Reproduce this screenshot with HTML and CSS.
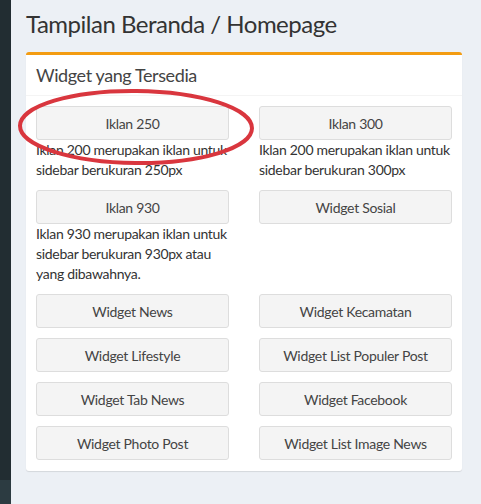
FILE: index.html
```html
<!DOCTYPE html>
<html>
<head>
<meta charset="utf-8">
<link rel="stylesheet" href="styles.css">
</head>
<body>
<aside class="sidebar"><div class="sidebar-fill"></div><div class="sidebar-item"></div></aside>
<main class="wrapper">
  <header class="content-header"><h1>Tampilan Beranda / Homepage</h1></header>
  <section class="content">
    <div class="box">
      <div class="box-header"><h3>Widget yang Tersedia</h3></div>
      <div class="box-body">
        <div class="row">
          <div class="col"><button class="btn">Iklan 250</button><p>Iklan 200 merupakan iklan untuk sidebar berukuran 250px</p></div>
          <div class="col"><button class="btn">Iklan 300</button><p>Iklan 200 merupakan iklan untuk sidebar berukuran 300px</p></div>
        </div>
        <div class="row">
          <div class="col"><button class="btn">Iklan 930</button><p>Iklan 930 merupakan iklan untuk sidebar berukuran 930px atau yang dibawahnya.</p></div>
          <div class="col"><button class="btn">Widget Sosial</button></div>
        </div>
        <div class="row grid">
          <button class="btn">Widget News</button><button class="btn">Widget Kecamatan</button>
          <button class="btn">Widget Lifestyle</button><button class="btn">Widget List Populer Post</button>
          <button class="btn">Widget Tab News</button><button class="btn">Widget Facebook</button>
          <button class="btn">Widget Photo Post</button><button class="btn">Widget List Image News</button>
        </div>
        <svg class="ring" width="240" height="80" viewBox="0 0 240 80"><ellipse cx="119" cy="39" rx="116" ry="36" fill="none" stroke="#d9363e" stroke-width="4" transform="rotate(0.6 119 39)"/></svg>
      </div>
    </div>
  </section>
</main>
</body>
</html>
```
FILE: styles.css
```css
* { box-sizing: border-box; }
html, body { margin: 0; height: 100%; }
body {
  display: flex;
  background: #ecf0f5;
  font-family: Lato, "Open Sans", sans-serif;
  font-size: 14px;
  letter-spacing: -0.3px;
  color: #333;
  overflow: hidden;
}
.sidebar { width: 11px; display: flex; flex-direction: column; flex: none; }
.sidebar-fill { flex: 1; background: #222d32; }
.sidebar-item { height: 24px; background: #2c3b41; }
.wrapper { flex: 1; }
.content-header { padding: 11px 15px 0; }
.content-header h1 { margin: 0; font-size: 24px; font-weight: 400; line-height: 1.1; letter-spacing: -0.5px; }
.content { padding: 15px 19px 15px 15px; }
.box {
  position: relative;
  background: #fff;
  border-top: 3px solid #f39c12;
  border-radius: 3px;
  box-shadow: 0 1px 1px rgba(0,0,0,0.1);
}
.box-header { padding: 10px; border-bottom: 1px solid #f4f4f4; }
.box-header h3 { margin: 0; font-size: 18px; font-weight: 400; line-height: 20px; color: #444; letter-spacing: -0.4px; }
.box-body { padding: 10px 10px 1px; position: relative; }
.row { display: grid; grid-template-columns: 1fr 1fr; column-gap: 30px; }
.grid { row-gap: 10px; padding-bottom: 10px; }
.col p { margin: 0 0 10px; line-height: 20px; }
.btn {
  display: block;
  width: 100%;
  height: 34px;
  font-family: inherit;
  font-size: 14px;
  letter-spacing: -0.3px;
  color: #444;
  background: #f4f4f4;
  border: 1px solid #ddd;
  border-radius: 3px;
  padding: 6px 12px;
}
.ring { position: absolute; left: -9px; top: -8px; pointer-events: none; }
```
